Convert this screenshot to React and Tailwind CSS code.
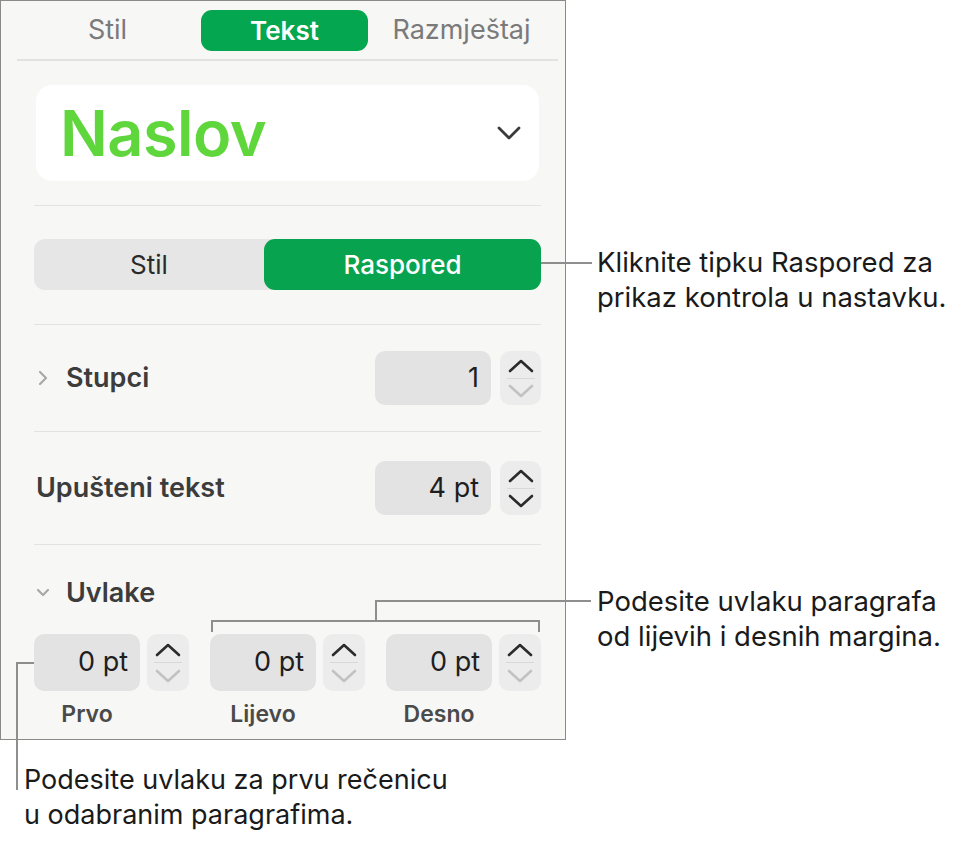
import React from 'react'

const font = { fontFamily: 'Inter, "Noto Sans", sans-serif' }

const ChevronUp = ({ muted }) => (
  <svg width="26" height="14" viewBox="0 0 26 14" fill="none">
    <polyline
      points="2,12 13,2 24,12"
      stroke={muted ? '#c2c2c2' : '#2b2b2b'}
      strokeWidth="2.6"
      strokeLinecap="round"
      strokeLinejoin="round"
    />
  </svg>
)

const ChevronDown = ({ muted }) => (
  <svg width="26" height="14" viewBox="0 0 26 14" fill="none">
    <polyline
      points="2,2 13,12 24,2"
      stroke={muted ? '#c2c2c2' : '#2b2b2b'}
      strokeWidth="2.6"
      strokeLinecap="round"
      strokeLinejoin="round"
    />
  </svg>
)

const Stepper = ({ downMuted, className }) => (
  <div className={`flex flex-col items-center justify-center rounded-[10px] bg-[#ececec] ${className}`}>
    <div className="flex h-1/2 items-end pb-[5px]">
      <ChevronUp />
    </div>
    <div className="h-px w-[28px] bg-[#d9d9d9]" />
    <div className="flex h-1/2 items-start pt-[6px]">
      <ChevronDown muted={downMuted} />
    </div>
  </div>
)

const Field = ({ value, className }) => (
  <div
    className={`flex items-center justify-end rounded-[10px] bg-[#e3e3e3] pr-[12px] text-[27px] text-[#1e1e1e] ${className}`}
  >
    {value}
  </div>
)

const Divider = () => <div className="h-px bg-[#e3e3e3]" />

const Indent = ({ label, value }) => (
  <div className="flex flex-col">
    <div className="flex gap-[7px]">
      <Field value={value} className="h-[57px] w-[106px]" />
      <Stepper downMuted className="h-[57px] w-[42px]" />
    </div>
    <div className="w-[106px] pt-[6px] text-center text-[23px] font-semibold text-[#4a4a4a]">{label}</div>
  </div>
)

export default function App() {
  return (
    <div className="relative h-[843px] w-[963px] overflow-hidden bg-white" style={font}>
      {/* inspector panel */}
      <div className="flex h-[740px] w-[566px] flex-col border border-[#8a8a8a] bg-[#f7f7f6]">
        <div className="flex pl-[18px] pt-[9px]">
          <div className="flex h-[41px] w-[177px] items-center justify-center text-[27px] text-[#7a7a7a]">Stil</div>
          <div className="flex h-[41px] w-[177px] items-center justify-center">
            <div className="flex h-[41px] w-[167px] items-center justify-center rounded-[11px] bg-[#04a64f] text-[26px] font-semibold text-white">
              Tekst
            </div>
          </div>
          <div className="flex h-[41px] w-[177px] items-center justify-center text-[27px] text-[#7a7a7a]">Razmještaj</div>
        </div>
        <div className="ml-[16px] mr-[7px] mt-[8px] h-[2px] bg-[#e2e2e2]" />

        <div className="flex flex-col pl-[33px] pr-[24px]">
          {/* paragraph style picker */}
          <div className="mx-[2px] mt-[24px] flex h-[96px] items-center justify-between rounded-[16px] bg-white pl-[24px] pr-[18px]">
            <span className="text-[63px] font-semibold tracking-[-0.5px] text-[#5fd63b]">Naslov</span>
            <svg width="24" height="14" viewBox="0 0 24 14" fill="none">
              <polyline points="2,2 12,12 22,2" stroke="#3a3a3a" strokeWidth="2.8" strokeLinecap="round" strokeLinejoin="round" />
            </svg>
          </div>
          <div className="mt-[24px]">
            <Divider />
          </div>

          {/* Stil / Raspored switch */}
          <div className="mt-[33px] flex h-[51px] rounded-[11px] bg-[#e6e6e6] text-[26px]">
            <div className="flex w-[230px] items-center justify-center text-[#2a2a2a]">Stil</div>
            <div className="flex flex-1 items-center justify-center rounded-[11px] bg-[#08a34f] font-medium text-white">
              Raspored
            </div>
          </div>
          <div className="mt-[34px]">
            <Divider />
          </div>

          {/* columns */}
          <div className="mt-[26px] flex h-[54px] items-center">
            <svg width="12" height="18" viewBox="0 0 12 18" fill="none" className="ml-[3px]">
              <polyline points="3,3 9,9 3,15" stroke="#a8a8a8" strokeWidth="2.2" strokeLinecap="round" strokeLinejoin="round" />
            </svg>
            <span className="ml-[17px] text-[27px] font-semibold text-[#3c3c3c]">Stupci</span>
            <div className="ml-auto flex gap-[9px]">
              <Field value="1" className="h-[54px] w-[116px]" />
              <Stepper downMuted className="h-[54px] w-[41px]" />
            </div>
          </div>
          <div className="mt-[26px]">
            <Divider />
          </div>

          {/* drop cap */}
          <div className="mt-[29px] flex h-[54px] items-center">
            <span className="ml-[2px] text-[27px] font-semibold text-[#3c3c3c]">Upušteni tekst</span>
            <div className="ml-auto flex gap-[9px]">
              <Field value="4 pt" className="h-[54px] w-[116px]" />
              <Stepper className="h-[54px] w-[41px]" />
            </div>
          </div>
          <div className="mt-[29px]">
            <Divider />
          </div>

          {/* indents */}
          <div className="mt-[33px] flex h-[30px] items-center">
            <svg width="16" height="12" viewBox="0 0 16 12" fill="none" className="ml-[1px]">
              <polyline points="3,3 8,8 13,3" stroke="#a8a8a8" strokeWidth="2.2" strokeLinecap="round" strokeLinejoin="round" />
            </svg>
            <span className="ml-[15px] text-[27px] font-semibold text-[#3c3c3c]">Uvlake</span>
          </div>
          <div className="mt-[26px] flex gap-[21px]">
            <Indent label="Prvo" value="0 pt" />
            <Indent label="Lijevo" value="0 pt" />
            <Indent label="Desno" value="0 pt" />
          </div>
        </div>
      </div>

      {/* callout: Raspored */}
      <div className="absolute left-[541px] top-[262px] h-[2px] w-[51px] bg-[#8e8e8e]" />
      <div className="absolute left-[597px] top-[245px] text-[27.5px] leading-[35px] text-[#1a1a1a]">
        Kliknite tipku Raspored za
        <br />
        prikaz kontrola u nastavku.
      </div>

      {/* callout: left/right indent bracket */}
      <div className="absolute left-[211px] top-[620px] h-[2px] w-[329px] bg-[#8e8e8e]" />
      <div className="absolute left-[211px] top-[620px] h-[12px] w-[2px] bg-[#8e8e8e]" />
      <div className="absolute left-[538px] top-[620px] h-[12px] w-[2px] bg-[#8e8e8e]" />
      <div className="absolute left-[375px] top-[600px] h-[22px] w-[2px] bg-[#8e8e8e]" />
      <div className="absolute left-[375px] top-[600px] h-[2px] w-[216px] bg-[#8e8e8e]" />
      <div className="absolute left-[597px] top-[584px] text-[27.5px] leading-[35px] text-[#1a1a1a]">
        Podesite uvlaku paragrafa
        <br />
        od lijevih i desnih margina.
      </div>

      {/* callout: first line indent */}
      <div className="absolute left-[16px] top-[662px] h-[2px] w-[18px] bg-[#8e8e8e]" />
      <div className="absolute left-[16px] top-[662px] h-[128px] w-[2px] bg-[#8e8e8e]" />
      <div className="absolute left-[24px] top-[762px] text-[27px] leading-[35px] text-[#1a1a1a]">
        Podesite uvlaku za prvu rečenicu
        <br />
        u odabranim paragrafima.
      </div>
    </div>
  )
}
